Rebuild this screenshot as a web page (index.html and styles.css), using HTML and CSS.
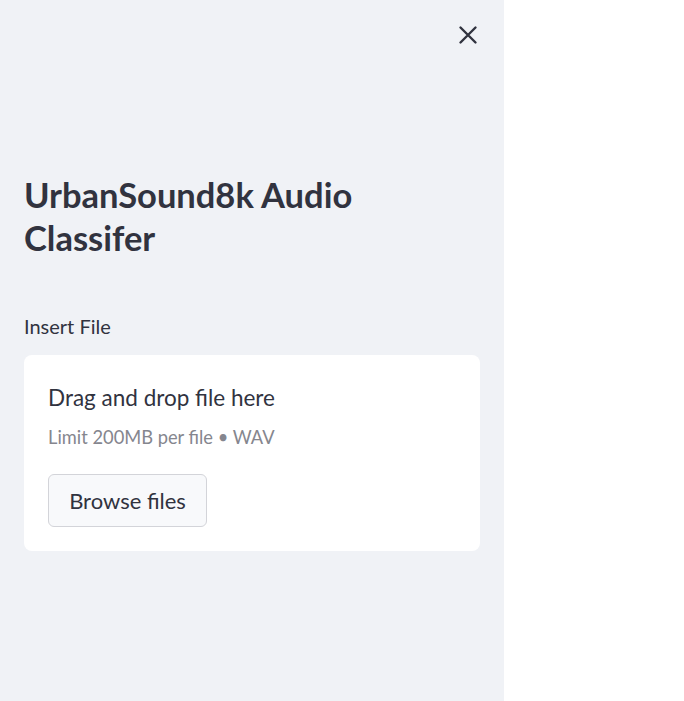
FILE: index.html
```html
<!DOCTYPE html>
<html>
<head>
<meta charset="utf-8">
<link rel="stylesheet" href="styles.css">
</head>
<body>
<div class="app">
  <aside class="sidebar">
    <div class="sidebar-top">
      <button class="close" aria-label="Close sidebar">
        <svg width="20" height="20" viewBox="0 0 20 20"><path d="M2.5 2.5 L17.5 17.5 M17.5 2.5 L2.5 17.5" stroke="#31333f" stroke-width="2.4" stroke-linecap="round" fill="none"/></svg>
      </button>
    </div>
    <div class="sidebar-content">
      <h1 class="title">UrbanSound8k Audio Classifer</h1>
      <div class="uploader">
        <label class="label">Insert File</label>
        <section class="dropzone">
          <div class="dz-text">
            <span class="dz-main">Drag and drop file here</span>
            <small class="dz-sub">Limit 200MB per file • WAV</small>
          </div>
          <button class="browse">Browse files</button>
        </section>
      </div>
    </div>
  </aside>
  <main class="main"></main>
</div>
</body>
</html>
```
FILE: styles.css
```css
* { box-sizing: border-box; }
html, body { margin: 0; padding: 0; height: 100%; }
body {
  font-family: "Lato", "Open Sans", sans-serif;
  color: #31333f;
  background: #ffffff;
}
.app { display: flex; height: 701px; }
.sidebar {
  width: 504px;
  flex: 0 0 504px;
  background: #f0f2f6;
  display: flex;
  flex-direction: column;
}
.sidebar-top {
  display: flex;
  justify-content: flex-end;
  padding: 25px 26px 0 0;
}
.close {
  border: none;
  background: none;
  padding: 0;
  width: 20px;
  height: 20px;
  display: flex;
}
.sidebar-content {
  padding: 0 24px;
}
.title {
  margin: 128px 0 0;
  font-size: 34.5px;
  line-height: 43px;
  font-weight: 700;
  letter-spacing: 0;
}
.uploader { margin-top: 54px; }
.label {
  display: block;
  font-size: 20px;
  line-height: 26px;
  margin-bottom: 16px;
}
.dropzone {
  background: #ffffff;
  border-radius: 8px;
  padding: 28px 24px 23px;
  height: 196px;
  display: flex;
  flex-direction: column;
  align-items: flex-start;
}
.dz-text { display: flex; flex-direction: column; }
.dz-main { font-size: 22.5px; line-height: 30px; }
.dz-sub { font-size: 18.3px; line-height: 26px; color: #85868e; margin-top: 11px; }
.browse {
  margin-top: 24px;
  font-family: inherit;
  font-size: 22px;
  color: #31333f;
  background: #f8f9fb;
  border: 1px solid #d3d4d9;
  border-radius: 6px;
  width: 159px;
  height: 53px;
  padding: 0;
  flex: 0 0 auto;
}
.main { flex: 1; background: #fff; }
```
